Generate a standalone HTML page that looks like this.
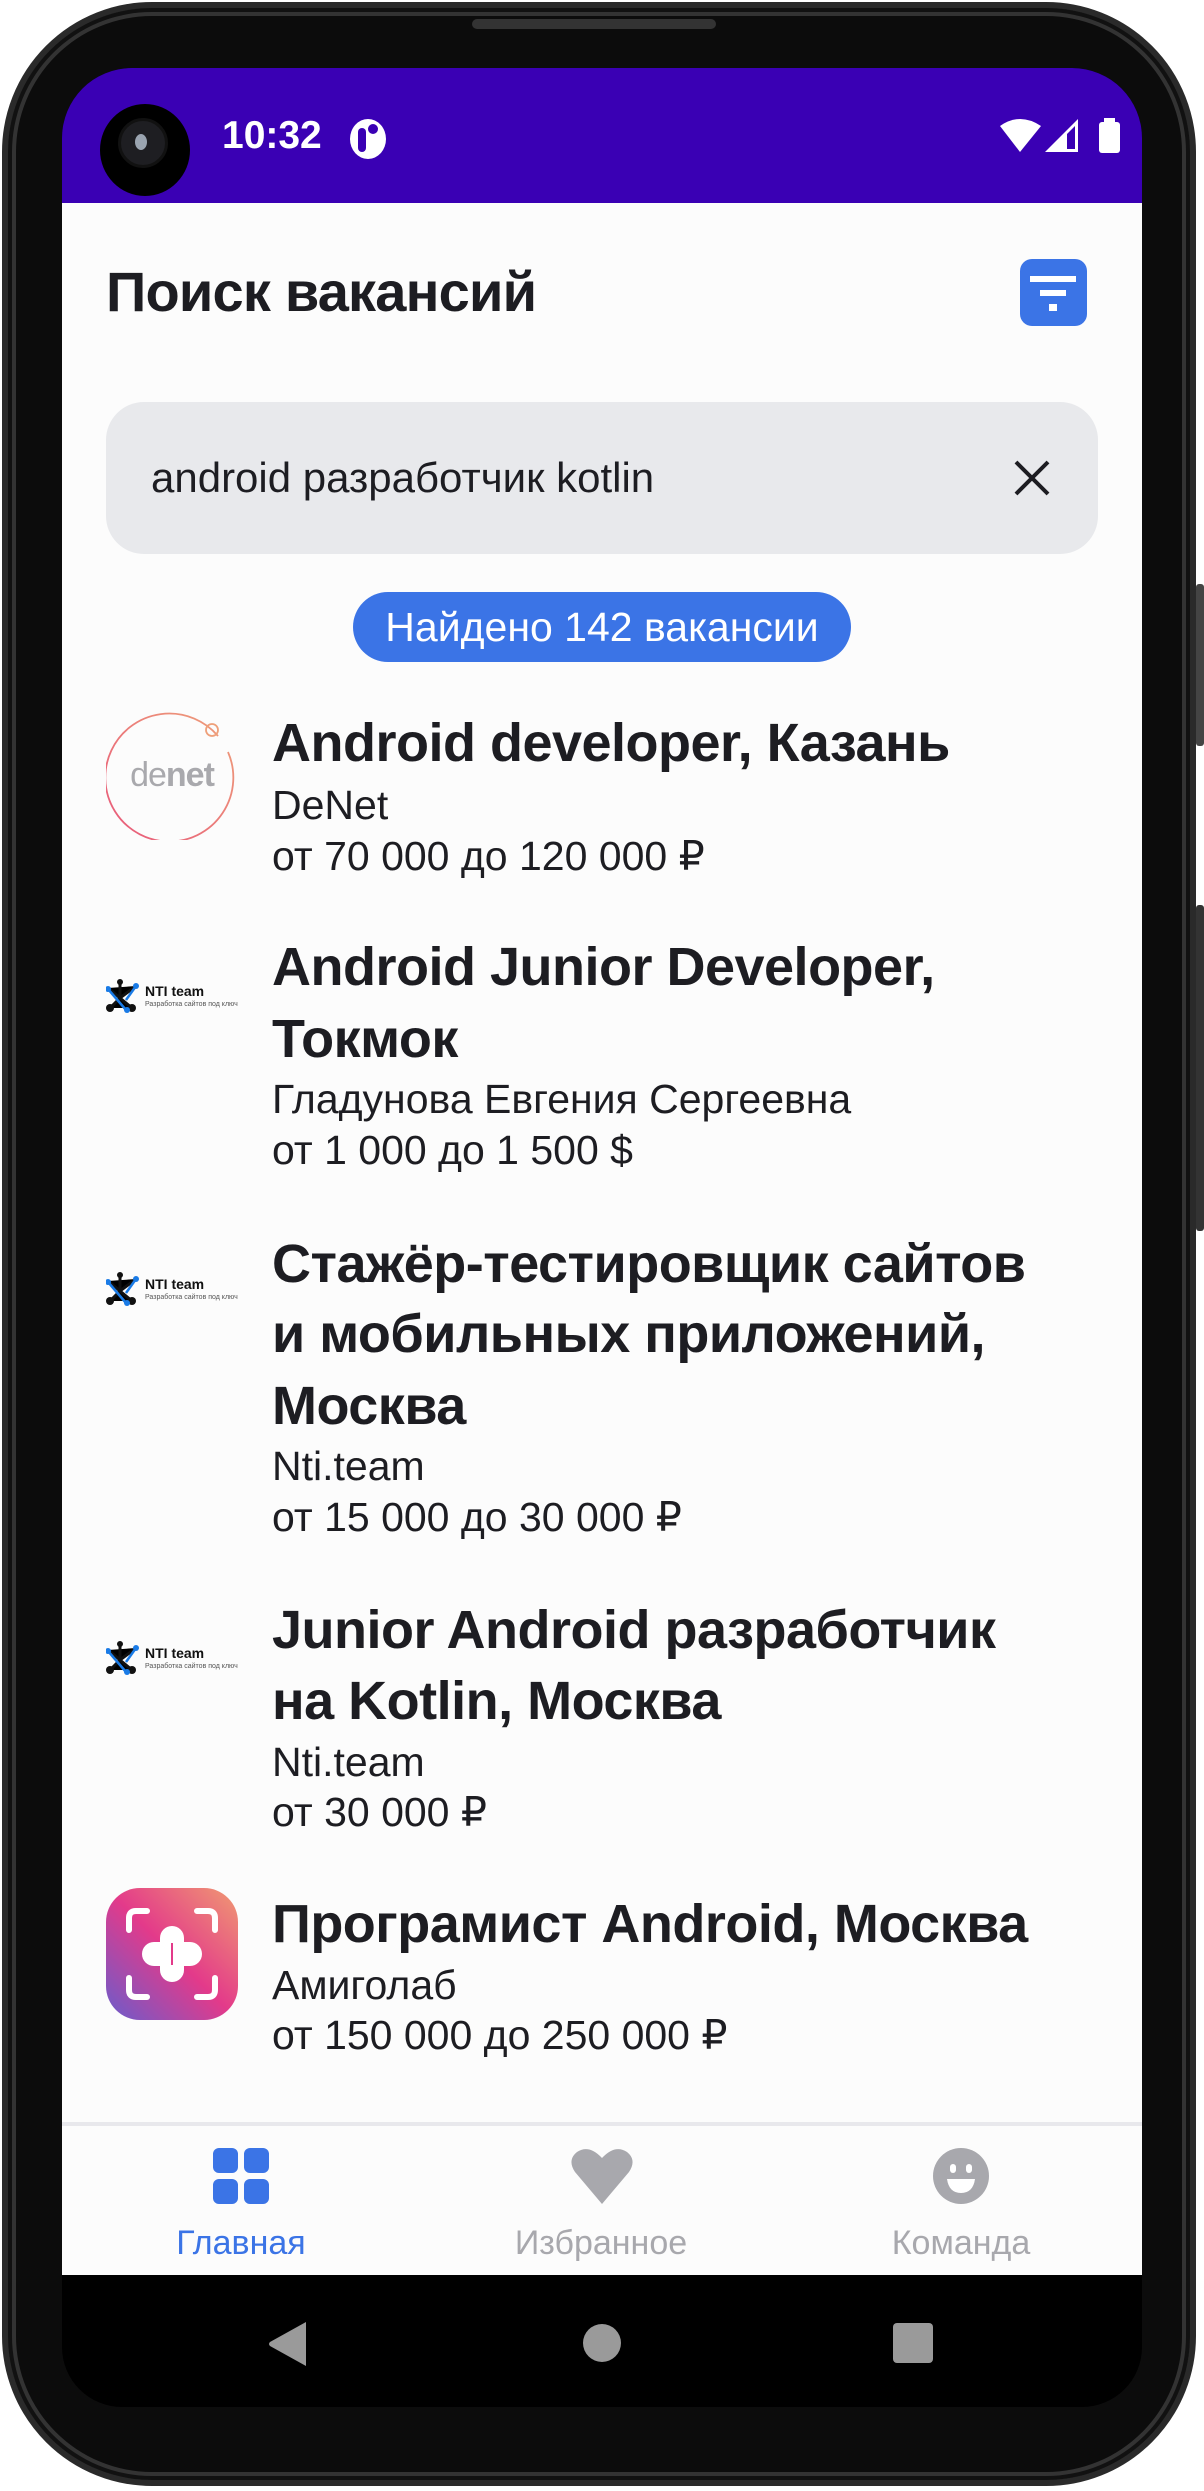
<!DOCTYPE html>
<html><head><meta charset="utf-8"><style>
*{margin:0;padding:0;box-sizing:border-box}
body{width:1204px;height:2491px;background:#fff;position:relative;overflow:hidden;font-family:"Liberation Sans","DejaVu Sans",sans-serif}
.abs{position:absolute}
.frame{left:2px;top:2px;width:1194px;height:2484px;border-radius:150px;background:#0c0c0c;border:6px solid #2a2a2a;box-shadow:inset 0 0 0 4px #111,inset 0 0 0 8px #333}
.screen{left:62px;top:68px;width:1080px;height:2339px;border-radius:70px 70px 60px 60px;background:#000;overflow:hidden}
.t{position:absolute;white-space:nowrap;color:#1d1d22}
.title{font-size:54px;line-height:72px;left:272px;color:#1d1d22;font-weight:bold;letter-spacing:-0.5px}
.sub{font-size:41px;line-height:50px;left:272px;color:#1d1d22}
</style></head><body>
<div class="abs frame"></div>
<div class="abs" style="left:472px;top:19px;width:244px;height:10px;border-radius:5px;background:#333"></div>
<div class="abs" style="left:1196px;top:584px;width:8px;height:162px;background:#444;border-radius:3px"></div>
<div class="abs" style="left:1196px;top:905px;width:8px;height:326px;background:#333;border-radius:3px"></div>
<div class="abs screen">
 <div class="abs" style="left:0;top:0;width:1080px;height:135px;background:#3a00b4"></div>
 <div class="abs" style="left:0;top:135px;width:1080px;height:2072px;background:#fcfcfc"></div>
 <div class="abs" style="left:0;top:2054px;width:1080px;height:4px;background:#e8e8ec"></div>
</div>
<!-- status -->
<div class="abs" style="left:100px;top:104px;width:90px;height:92px;border-radius:50%;background:#000"></div>
<div class="abs" style="left:118px;top:118px;width:50px;height:50px;border-radius:50%;background:#1e1e22;border:3px solid #111"></div>
<div class="abs" style="left:135px;top:134px;width:12px;height:16px;border-radius:50%;background:#9aa4b0"></div>
<div class="t" style="left:222px;top:114px;font-size:39px;line-height:44px;color:#fff;font-weight:bold">10:32</div>
<div class="abs" style="left:350px;top:119px;width:36px;height:40px;border-radius:50%;background:#fff"></div>
<div class="abs" style="left:358px;top:128px;width:8px;height:24px;background:#3a00b4;border-radius:4px"></div>
<div class="abs" style="left:368px;top:124px;width:10px;height:10px;border-radius:50%;background:#3a00b4"></div>
<svg class="abs" style="left:1000px;top:118px" width="122" height="36" viewBox="0 0 122 36">
 <path d="M0 8 Q20 -6 41 8 L20 34 Z" fill="#fff"/>
 <path d="M45 34 L78 1 L78 34 Z" fill="#fff"/><path d="M67 16 L75 8 L75 31 L67 31Z" fill="#3a00b4"/>
 <rect x="99" y="4" width="21" height="31" rx="3" fill="#fff"/><rect x="104" y="0" width="11" height="6" fill="#fff"/>
</svg>
<!-- header -->
<div class="t" style="left:106px;top:258px;font-size:56px;line-height:68px;letter-spacing:-0.8px;font-weight:bold">Поиск вакансий</div>
<div class="abs" style="left:1020px;top:259px;width:67px;height:67px;border-radius:12px;background:#3b74e6"></div>
<div class="abs" style="left:1030px;top:276px;width:46px;height:6px;background:#fff"></div>
<div class="abs" style="left:1040px;top:290px;width:26px;height:6px;background:#fff"></div>
<div class="abs" style="left:1049px;top:304px;width:8px;height:7px;background:#fff"></div>
<!-- search -->
<div class="abs" style="left:106px;top:402px;width:992px;height:152px;border-radius:38px;background:#e8e9ec"></div>
<div class="t" style="left:151px;top:454px;font-size:42px;line-height:48px">android разработчик kotlin</div>
<svg class="abs" style="left:1012px;top:458px" width="40" height="40" viewBox="0 0 40 40"><path d="M4 4L36 36M36 4L4 36" stroke="#1d1d22" stroke-width="4"/></svg>
<!-- chip -->
<div class="abs" style="left:353px;top:592px;width:498px;height:70px;border-radius:35px;background:#3b74e6;color:#fff;font-size:41px;line-height:70px;text-align:center">Найдено 142 вакансии</div>
<!-- logos -->
<svg class="abs" style="left:106px;top:708px" width="132" height="132" viewBox="0 0 132 132">
 <defs><linearGradient id="dg" x1="0" y1="1" x2="1" y2="0"><stop offset="0" stop-color="#e8577a"/><stop offset="1" stop-color="#eea07a"/></linearGradient></defs>
 <path d="M112 28 A64 64 0 1 0 122 44" fill="none" stroke="url(#dg)" stroke-width="1.8"/>
 <circle cx="106" cy="22" r="6" fill="none" stroke="#eea07a" stroke-width="1.8"/>
 <text x="66" y="78" font-size="34" text-anchor="middle" fill="#a9a9ad" font-family="Liberation Sans" letter-spacing="-1">de<tspan font-weight="bold">net</tspan></text>
</svg>
<svg class="abs" style="left:106px;top:978px" width="135" height="36" viewBox="0 0 135 36">
 <path d="M14 4 L14 20 M4 30 L14 20 L26 30 M2 10 L14 20 L30 8" stroke="#111" stroke-width="3"/>
 <circle cx="14" cy="4" r="3" fill="#111"/><circle cx="4" cy="30" r="4" fill="#111"/><circle cx="26" cy="30" r="4" fill="#111"/>
 <circle cx="2" cy="11" r="3" fill="#1a7be6"/><circle cx="30" cy="8" r="3" fill="#1a7be6"/><circle cx="21" cy="32" r="3" fill="#1a7be6"/>
 <path d="M2 11 L20 32 M30 8 L20 22" stroke="#1a7be6" stroke-width="2.5"/>
 <text x="39" y="18" font-size="14" font-weight="bold" fill="#111" font-family="Liberation Sans">NTI team</text>
 <text x="39" y="28" font-size="7" fill="#555" font-family="Liberation Sans">Разработка сайтов под ключ</text>
</svg>
<svg class="abs" style="left:106px;top:1271px" width="135" height="36" viewBox="0 0 135 36">
 <path d="M14 4 L14 20 M4 30 L14 20 L26 30 M2 10 L14 20 L30 8" stroke="#111" stroke-width="3"/>
 <circle cx="14" cy="4" r="3" fill="#111"/><circle cx="4" cy="30" r="4" fill="#111"/><circle cx="26" cy="30" r="4" fill="#111"/>
 <circle cx="2" cy="11" r="3" fill="#1a7be6"/><circle cx="30" cy="8" r="3" fill="#1a7be6"/><circle cx="21" cy="32" r="3" fill="#1a7be6"/>
 <path d="M2 11 L20 32 M30 8 L20 22" stroke="#1a7be6" stroke-width="2.5"/>
 <text x="39" y="18" font-size="14" font-weight="bold" fill="#111" font-family="Liberation Sans">NTI team</text>
 <text x="39" y="28" font-size="7" fill="#555" font-family="Liberation Sans">Разработка сайтов под ключ</text>
</svg>
<svg class="abs" style="left:106px;top:1640px" width="135" height="36" viewBox="0 0 135 36">
 <path d="M14 4 L14 20 M4 30 L14 20 L26 30 M2 10 L14 20 L30 8" stroke="#111" stroke-width="3"/>
 <circle cx="14" cy="4" r="3" fill="#111"/><circle cx="4" cy="30" r="4" fill="#111"/><circle cx="26" cy="30" r="4" fill="#111"/>
 <circle cx="2" cy="11" r="3" fill="#1a7be6"/><circle cx="30" cy="8" r="3" fill="#1a7be6"/><circle cx="21" cy="32" r="3" fill="#1a7be6"/>
 <path d="M2 11 L20 32 M30 8 L20 22" stroke="#1a7be6" stroke-width="2.5"/>
 <text x="39" y="18" font-size="14" font-weight="bold" fill="#111" font-family="Liberation Sans">NTI team</text>
 <text x="39" y="28" font-size="7" fill="#555" font-family="Liberation Sans">Разработка сайтов под ключ</text>
</svg>
<svg class="abs" style="left:106px;top:1888px" width="132" height="132" viewBox="0 0 132 132">
 <defs><linearGradient id="ag" x1="0" y1="1" x2="1" y2="0"><stop offset="0" stop-color="#6a5ccc"/><stop offset="0.5" stop-color="#e33a8a"/><stop offset="1" stop-color="#f09a72"/></linearGradient></defs>
 <rect x="0" y="0" width="132" height="132" rx="34" fill="url(#ag)"/>
 <g stroke="#fff" stroke-width="6" fill="none" stroke-linecap="round"><path d="M23 42V30Q23 23 30 23H41M91 23H102Q109 23 109 30V42M23 90V102Q23 109 30 109H41M91 109H102Q109 109 109 102V90"/></g>
 <rect x="54" y="38" width="24" height="56" rx="12" fill="#fff"/><rect x="36" y="54" width="60" height="24" rx="12" fill="#fff"/>
 <rect x="65" y="55" width="2" height="22" fill="#e33a8a"/>
</svg>
<!-- items -->
<div class="t title" style="top:707px">Android developer, Казань</div>
<div class="t sub" style="top:780px">DeNet</div>
<div class="t sub" style="top:831px">от 70 000 до 120 000 ₽</div>

<div class="t title" style="top:931px">Android Junior Developer,</div>
<div class="t title" style="top:1003px">Токмок</div>
<div class="t sub" style="top:1074px">Гладунова Евгения Сергеевна</div>
<div class="t sub" style="top:1125px">от 1 000 до 1 500 $</div>

<div class="t title" style="top:1228px">Стажёр-тестировщик сайтов</div>
<div class="t title" style="top:1298px">и мобильных приложений,</div>
<div class="t title" style="top:1370px">Москва</div>
<div class="t sub" style="top:1441px">Nti.team</div>
<div class="t sub" style="top:1492px">от 15 000 до 30 000 ₽</div>

<div class="t title" style="top:1594px">Junior Android разработчик</div>
<div class="t title" style="top:1665px">на Kotlin, Москва</div>
<div class="t sub" style="top:1737px">Nti.team</div>
<div class="t sub" style="top:1787px">от 30 000 ₽</div>

<div class="t title" style="top:1888px">Програмист Android, Москва</div>
<div class="t sub" style="top:1960px">Амиголаб</div>
<div class="t sub" style="top:2010px">от 150 000 до 250 000 ₽</div>
<!-- bottom nav -->
<svg class="abs" style="left:213px;top:2148px" width="56" height="56" viewBox="0 0 56 56" fill="#3b74e6">
 <rect x="0" y="0" width="25" height="25" rx="6"/><rect x="31" y="0" width="25" height="25" rx="6"/><rect x="0" y="31" width="25" height="25" rx="6"/><rect x="31" y="31" width="25" height="25" rx="6"/></svg>
<svg class="abs" style="left:571px;top:2148px" width="62" height="56" viewBox="0 0 62 56"><path d="M31 56 L4 24 Q-4 12 6 4 Q18 -4 31 10 Q44 -4 56 4 Q66 12 58 24 Z" fill="#a8a8ad"/></svg>
<svg class="abs" style="left:933px;top:2148px" width="56" height="56" viewBox="0 0 56 56"><circle cx="28" cy="28" r="28" fill="#a8a8ad"/><rect x="17" y="16" width="6" height="9" rx="3" fill="#fff"/><rect x="33" y="16" width="6" height="9" rx="3" fill="#fff"/><path d="M14 31 H42 Q40 45 28 45 Q16 45 14 31Z" fill="#fff"/></svg>
<div class="t" style="left:141px;top:2222px;width:200px;text-align:center;font-size:34px;line-height:42px;color:#3b74e6">Главная</div>
<div class="t" style="left:481px;top:2222px;width:240px;text-align:center;font-size:34px;line-height:42px;color:#a8a8ad">Избранное</div>
<div class="t" style="left:861px;top:2222px;width:200px;text-align:center;font-size:34px;line-height:42px;color:#a8a8ad">Команда</div>
<!-- system nav -->
<svg class="abs" style="left:268px;top:2322px" width="40" height="44" viewBox="0 0 40 44"><path d="M38 0 V44 L2 24 Q0 22 2 20 Z" fill="#9a9a9a"/></svg>
<div class="abs" style="left:583px;top:2324px;width:38px;height:38px;border-radius:50%;background:#9a9a9a"></div>
<div class="abs" style="left:893px;top:2323px;width:40px;height:40px;border-radius:4px;background:#9a9a9a"></div>
</body></html>
